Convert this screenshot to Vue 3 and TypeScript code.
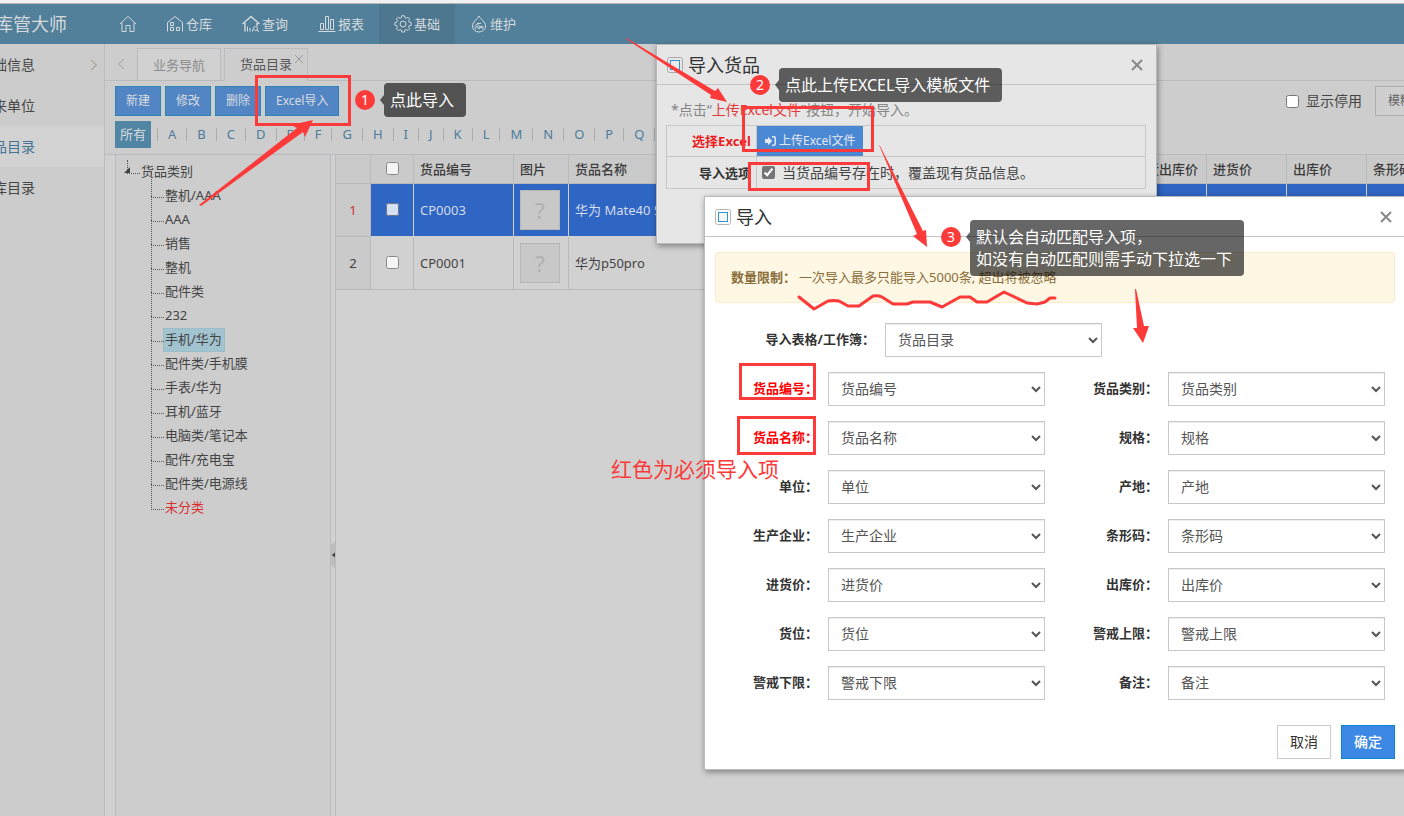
<script setup lang="ts">
import { ref } from 'vue'

interface Field {
  id: string
  label: string
  required?: boolean
}

interface Product {
  code: string
  name: string
  selected: boolean
}

const menus = [
  { icon: 'home', label: '' },
  { icon: 'store', label: '仓库' },
  { icon: 'query', label: '查询' },
  { icon: 'report', label: '报表' },
  { icon: 'gear', label: '基础' },
  { icon: 'drop', label: '维护' },
]
const activeMenu = ref('gear')

const sideItems = ['往来单位', '货品目录', '仓库目录']
const activeSide = ref('货品目录')

const letters = 'ABCDEFGHIJKLMNOPQRSTUVWXYZ'.split('')

const categories = [
  '整机/AAA', 'AAA', '销售', '整机', '配件类', '232', '手机/华为', '配件类/手机膜',
  '手表/华为', '耳机/蓝牙', '电脑类/笔记本', '配件/充电宝', '配件类/电源线', '未分类',
]
const activeCategory = ref('手机/华为')

const products = ref<Product[]>([
  { code: 'CP0003', name: '华为 Mate40 5G', selected: true },
  { code: 'CP0001', name: '华为p50pro', selected: false },
])

const fields: Field[] = [
  { id: 'code', label: '货品编号', required: true },
  { id: 'category', label: '货品类别' },
  { id: 'name', label: '货品名称', required: true },
  { id: 'spec', label: '规格' },
  { id: 'unit', label: '单位' },
  { id: 'origin', label: '产地' },
  { id: 'maker', label: '生产企业' },
  { id: 'barcode', label: '条形码' },
  { id: 'cost', label: '进货价' },
  { id: 'price', label: '出库价' },
  { id: 'slot', label: '货位' },
  { id: 'upper', label: '警戒上限' },
  { id: 'lower', label: '警戒下限' },
  { id: 'remark', label: '备注' },
]
const overwrite = ref(true)
const showDisabled = ref(false)
</script>

<template>
  <div class="page">
    <div class="strip"></div>
    <header class="topbar">
      <div class="brand"><span>库管大师</span></div>
      <nav class="menu">
        <a
          v-for="m in menus"
          :key="m.icon"
          href="#"
          class="menu-item"
          :class="{ active: activeMenu === m.icon }"
          :aria-label="m.label || '首页'"
          @click.prevent="activeMenu = m.icon"
        >
          <svg class="menu-icon" viewBox="0 0 18 18" width="18" height="18" fill="none" stroke="currentColor" stroke-width="1">
            <template v-if="m.icon === 'home'">
              <path d="M1 9 9 1.5 17 9M3 8v8.500h4v-6h4v6h4V8" />
            </template>
            <template v-else-if="m.icon === 'store'">
              <path d="M1.5 16.5V7.5L9 1.5l7.500 6v9M4.500 7.500h3v3h-3zM4.500 12.500h3v3h-3zM10.500 12.500h3v3h-3z" />
            </template>
            <template v-else-if="m.icon === 'query'">
              <path stroke-width="1.400" d="M.5 9 9 1.500 17.500 9M3 8v8.500M15 8v3" />
              <path d="M5.500 16.500v-5M8 16.500V13M10.500 16.500v-2" />
              <circle cx="13.500" cy="13.500" r="2" />
              <path d="m15 15 2 2" />
            </template>
            <template v-else-if="m.icon === 'report'">
              <path d="M2.500 8.500h3v6h-3zM7.500 1.500h3v13h-3zM12.500 4.500h3v10h-3zM.5 16.500h17" />
            </template>
            <template v-else-if="m.icon === 'gear'">
              <path d="M7.600 1.500h2.800l.5 2.100 1.300.6 1.900-1.200 1.900 1.900-1.200 1.900.6 1.300 2.100.5v2.800l-2.100.5-.6 1.300 1.200 1.900-1.900 1.900-1.900-1.200-1.300.6-.5 2.100H7.600l-.5-2.100-1.300-.6-1.900 1.200L2 15.100l1.200-1.900-.6-1.300-2.100-.5V8.600l2.100-.5.6-1.300L2 4.900 3.900 3l1.900 1.200 1.300-.6z" transform="translate(.4 -.7) scale(.96)" />
              <circle cx="9" cy="9" r="3" />
            </template>
            <template v-else>
              <path d="M9 1C7 4.500 2.500 7 2.500 11a6.500 6 0 0 0 13 0C15.500 7 11 4.500 9 1z" />
              <path d="M4.500 11.500c2-3 3.500-2.500 4.500-.5s3 2 4.500 0M5 14l2-3 2 3 2-3 2 3M7 8.500h4" />
            </template>
          </svg>
          <span v-if="m.label">{{ m.label }}</span>
        </a>
      </nav>
    </header>

    <div class="body">
      <aside class="side">
        <a href="#" class="side-item side-head" @click.prevent>
          <span>基础信息</span>
          <svg width="8" height="12" viewBox="0 0 8 12" fill="none" stroke="#a08f7e"><path d="m1 1 5.500 5L1 11" /></svg>
        </a>
        <a
          v-for="s in sideItems"
          :key="s"
          href="#"
          class="side-item"
          :class="{ active: s === activeSide }"
          @click.prevent="activeSide = s"
        ><span>{{ s }}</span></a>
      </aside>

      <main class="main">
        <div class="tabs">
          <button class="tab-prev" type="button" aria-label="向左">
            <svg width="8" height="12" viewBox="0 0 8 12" fill="none" stroke="#999"><path d="M7 1 1.500 6 7 11" /></svg>
          </button>
          <button class="tab" type="button">业务导航</button>
          <button class="tab current" type="button">
            货品目录
            <svg class="tab-close" width="8" height="8" viewBox="0 0 8 8" stroke="#999"><path d="m0 0 8 8M8 0 0 8" /></svg>
          </button>
        </div>

        <div class="toolbar">
          <button class="tool" type="button">新建</button>
          <button class="tool" type="button">修改</button>
          <button class="tool" type="button">删除</button>
          <button class="tool" type="button">Excel导入</button>
          <label class="show-disabled"><input v-model="showDisabled" type="checkbox" />显示停用</label>
          <button class="mode" type="button">模糊查询</button>
        </div>

        <div class="letters">
          <a href="#" class="all" @click.prevent>所有</a>
          <a v-for="l in letters" :key="l" href="#" class="letter" @click.prevent>{{ l }}</a>
        </div>

        <div class="content">
          <div class="tree">
            <div class="root">货品类别</div>
            <ul class="nodes">
              <li v-for="c in categories" :key="c" class="node">
                <a
                  href="#"
                  :class="{ active: c === activeCategory, warn: c === '未分类' }"
                  @click.prevent="activeCategory = c"
                >{{ c }}</a>
              </li>
            </ul>
          </div>
          <div class="splitter">
            <svg width="5" height="34" viewBox="0 0 5 34"><path d="M5 0 0 5v24l5 5z" fill="#bdbdbd" /><path d="M5 14 1 17l4 3z" fill="#444" /></svg>
          </div>
          <div class="grid">
            <table>
              <colgroup>
                <col class="c-no" /><col class="c-check" /><col class="c-code" /><col class="c-pic" /><col />
                <col class="c-price" /><col class="c-price" /><col class="c-price" /><col class="c-code" />
              </colgroup>
              <thead>
                <tr>
                  <th></th>
                  <th class="mid"><input type="checkbox" aria-label="全选" /></th>
                  <th>货品编号</th>
                  <th>图片</th>
                  <th>货品名称</th>
                  <th>最近出库价</th>
                  <th>进货价</th>
                  <th>出库价</th>
                  <th>条形码</th>
                </tr>
              </thead>
              <tbody>
                <tr v-for="(p, i) in products" :key="p.code" :class="{ picked: p.selected }">
                  <td class="no">{{ i + 1 }}</td>
                  <td class="mid"><input type="checkbox" :aria-label="p.code" /></td>
                  <td>{{ p.code }}</td>
                  <td class="pic"><span>?</span></td>
                  <td>{{ p.name }}</td>
                  <td></td>
                  <td></td>
                  <td></td>
                  <td></td>
                </tr>
              </tbody>
            </table>
          </div>
        </div>
      </main>
    </div>

    <section class="dialog upload" role="dialog" aria-labelledby="upload-title">
      <header class="dialog-head">
        <svg width="16" height="16" viewBox="0 0 16 16" fill="none"><rect x=".5" y=".5" width="15" height="15" rx="2" stroke="#aaa" /><rect x="3.500" y="3.500" width="9" height="9" fill="#ebebeb" stroke="#3594c8" /></svg>
        <h2 id="upload-title">导入货品</h2>
        <button class="close" type="button" aria-label="关闭"><svg width="12" height="12" viewBox="0 0 12 12" stroke="#888" stroke-width="2"><path d="m1 1 10 10M11 1 1 11" /></svg></button>
      </header>
      <p class="tip">*点击“<em>上传Excel文件</em>”按钮，开始导入。</p>
      <table class="options">
        <tbody>
          <tr>
            <th class="must">选择Excel</th>
            <td class="upload-cell">
              <button class="upload-btn" type="button">
                <svg width="11" height="10" viewBox="0 0 11 10" fill="currentColor"><path d="M0 3h3V.8L7.200 5 3 9.200V7H0zM7 0h2a2 2 0 0 1 2 2v6a2 2 0 0 1-2 2H7V8.500h2a.5.5 0 0 0 .5-.5V2a.5.5 0 0 0-.5-.5H7z" /></svg>
                上传Excel文件
              </button>
            </td>
          </tr>
          <tr>
            <th>导入选项</th>
            <td><label class="overwrite"><input v-model="overwrite" type="checkbox" />当货品编号存在时，覆盖现有货品信息。</label></td>
          </tr>
        </tbody>
      </table>
    </section>

    <section class="dialog mapping" role="dialog" aria-labelledby="mapping-title">
      <header class="dialog-head">
        <svg width="16" height="16" viewBox="0 0 16 16" fill="none"><rect x=".5" y=".5" width="15" height="15" rx="2" stroke="#b5b5b5" /><rect x="3.500" y="3.500" width="9" height="9" fill="#f6f6f6" stroke="#2a94d6" /></svg>
        <h2 id="mapping-title">导入</h2>
        <button class="close" type="button" aria-label="关闭"><svg width="12" height="12" viewBox="0 0 12 12" stroke="#888" stroke-width="2"><path d="m1 1 10 10M11 1 1 11" /></svg></button>
      </header>
      <div class="mapping-body">
        <div class="alert"><strong>数量限制：</strong><span>一次导入最多只能导入5000条, 超出将被忽略</span></div>
        <form class="form" @submit.prevent>
          <div class="field sheet">
            <label for="sheet">导入表格/工作簿：</label>
            <select id="sheet"><option>货品目录</option></select>
          </div>
          <div v-for="f in fields" :key="f.id" class="field" :class="{ required: f.required }">
            <label :for="f.id">{{ f.label }}：</label>
            <select :id="f.id"><option>{{ f.label }}</option></select>
          </div>
        </form>
        <footer class="actions">
          <button class="cancel" type="button">取消</button>
          <button class="confirm" type="button">确定</button>
        </footer>
      </div>
    </section>

    <svg class="marks" width="100%" height="100%" aria-hidden="true">
      <g fill="none" stroke="#fc3a39" stroke-width="3">
        <rect x="256.500" y="76.500" width="93" height="48" />
        <rect x="743.500" y="107.500" width="129" height="43" />
        <rect x="749.500" y="163.500" width="119" height="26" />
        <rect x="740.500" y="364.500" width="74" height="34" />
        <rect x="738.500" y="417.500" width="76" height="36" />
        <path
          stroke-linecap="round"
          stroke-linejoin="round"
          d="M799 297 814 309 828 301Q834 300 839 301L848 306H859L873 296Q878 295 882 297L893 304H907L913 302H930L942 307L960 297H970L977 302H987L1004 292L1027 303L1037 304L1045 302L1050 298H1055"
        />
      </g>
      <g fill="#fc3a39">
        <path d="M199 205 297 128 291 125 313 120 305 137 303 132 201 206z" />
        <path d="M625 38 628 39 715 91 718 88 727 102 710 98 711 95 626 39z" />
        <path d="M879 145 880 146 923 231 926 230 927 247 913 236 917 234z" />
        <path d="M1135 289 1136 289 1144 326 1149 326 1143 343 1133 328 1137 328z" />
      </g>
    </svg>
    <div class="note n1"><b>1</b><span>点此导入</span></div>
    <div class="note n2"><b>2</b><span>点此上传EXCEL导入模板文件</span></div>
    <div class="note n3"><b>3</b><span>默认会自动匹配导入项，<br />如没有自动匹配则需手动下拉选一下</span></div>
    <div class="remark">红色为必须导入项</div>
  </div>
</template>

<style>
html, body { height: 100%; overflow: hidden; }
</style>

<style scoped>
.page, .page * { box-sizing: border-box; }
.page {
  position: relative;
  display: flex;
  flex-direction: column;
  height: 100vh;
  overflow: hidden;
  background: #d0d0d0;
  color: #444;
  font: 13px/20px "Noto Sans", "Noto Sans CJK SC", sans-serif;
}
button, select, input { font: inherit; color: inherit; margin: 0; }
button { padding: 0; border: 0; background: none; white-space: nowrap; }
a { color: inherit; text-decoration: none; }
input[type="checkbox"] { width: 13px; height: 13px; flex: none; }

.strip { flex: none; height: 4px; background: #f1f1f4; border-bottom: 1px solid #b4b8bb; }
.topbar { flex: none; display: flex; height: 40px; background: #52809a; color: #d6dadd; }
.brand { flex: none; display: flex; align-items: center; width: 105px; overflow: hidden; font-size: 18px; white-space: nowrap; }
.brand span { margin-left: -5px; }
.menu { display: flex; }
.menu-item { display: flex; align-items: center; gap: 2px; padding: 0 15px; }
.menu-item:first-child { padding: 0 14px; }
.menu-item.active { background: #4d768f; }
.menu-icon { flex: none; }

.body { flex: 1; display: flex; min-height: 0; }
.side { flex: none; width: 105px; overflow: hidden; background: #cccccc; border-right: 1px solid #bdbdbf; font-size: 14px; }
.side-item { display: flex; align-items: center; height: 41px; white-space: nowrap; }
.side-item span { margin-left: -21px; }
.side-head { justify-content: space-between; padding-right: 6px; }
.side-item.active { background: #d2d2d2; color: #437394; }

.main { flex: 1; min-width: 0; display: flex; flex-direction: column; background: #cdcdcd; }
.tabs { flex: none; display: flex; align-items: flex-end; height: 37px; border-bottom: 1px solid #b9bbbf; }
.tab-prev { width: 32px; height: 32px; display: flex; align-items: center; justify-content: center; }
.tab { position: relative; height: 32px; padding: 0 15px; background: #d1d1d1; border: 1px solid #b9bbbf; border-bottom: 0; color: #8c8c8c; }
.tab.current { margin: 0 0 -1px 3px; height: 33px; padding-bottom: 2px; color: #555; background: #cdcdcd; }
.tab-close { position: absolute; top: 6px; right: 4px; }
.toolbar { flex: none; display: flex; align-items: center; gap: 4px; height: 40px; padding: 5px 0 5px 10px; overflow: hidden; }
.tool { height: 30px; padding: 0 10px; border: 1px solid #2c83b5; background: #5285c3; color: #d9dce0; font-size: 12px; }
.show-disabled { display: flex; align-items: center; gap: 7px; margin-left: auto; font-size: 14px; white-space: nowrap; }
.mode { height: 30px; margin: 0 -45px 0 9px; padding: 0 12px; border: 1px solid #adadad; background: #cfcfcf; font-size: 12px; color: #666; }
.letters { flex: none; display: flex; align-items: center; height: 33px; padding: 0 0 6px 10px; overflow: hidden; color: #4c7c9c; }
.all { height: 27px; margin-right: 6px; padding: 0 5px; background: #5086a4; color: #dadcde; line-height: 27px; white-space: nowrap; }
.letter { padding: 0 10px; border-left: 1px solid #acacac; line-height: 13px; }

.content { flex: 1; display: flex; min-height: 0; border-top: 1px solid #b9bbbf; padding-left: 10px; background: #d1d1d1; }
.tree { flex: none; width: 216px; padding: 5px 0 0 9px; background: #cdcdcd; border: solid #b9bbbf; border-width: 0 1px; }
.root { position: relative; height: 24px; padding-left: 16px; line-height: 22px; }
.root::before { content: ""; position: absolute; left: 2px; top: 0; width: 12px; height: 13px; border: dotted #555; border-width: 0 0 1px 1px; }
.root::after { content: ""; position: absolute; left: -1px; top: 7px; border: solid transparent; border-width: 0 0 6px 6px; border-bottom-color: #444; }
.nodes { margin: 0 0 0 26px; padding: 0; list-style: none; }
.node { position: relative; height: 24px; padding-left: 12px; line-height: 22px; white-space: nowrap; }
.node::before { content: ""; position: absolute; left: 0; top: -12px; width: 12px; height: 25px; border: dotted #555; border-width: 0 0 1px 1px; }
.node a { display: inline-block; height: 24px; padding: 0 3px 0 2px; }
.node a.active { padding-left: 1px; padding-right: 2px; background: #a2c3d0; border: 1px solid #9bbcc9; line-height: 20px; }
.node a.warn { color: #d8302f; }
.splitter { flex: none; display: flex; align-items: center; width: 4px; padding-top: 138px; }
.grid { flex: 1; min-width: 0; overflow: hidden; border-left: 1px solid #b9bbbf; }
.grid table { width: calc(100% + 63px); table-layout: fixed; border-collapse: separate; border-spacing: 0; }
.c-no { width: 35px; }
.c-check { width: 43px; }
.c-code { width: 100px; }
.c-pic { width: 55px; }
.c-price { width: 80px; }
.grid th, .grid td { padding: 0 6px; border: solid #b9b9b9; border-width: 0 1px 1px 0; overflow: hidden; white-space: nowrap; text-align: left; }
.grid th { height: 29px; padding-bottom: 1px; background: #cacaca; font-weight: 500; color: #3c3c3c; }
.grid td { height: 53px; }
.grid .mid { text-align: center; padding: 0 0 4px; }
.grid .mid input { opacity: 0.8; vertical-align: middle; }
.grid .no { text-align: center; background: #cacaca; padding: 0; }
.picked td { background: #2f65c3; color: #d5dcea; border-right-color: #d0d0d0; border-bottom-color: #d0d0d0; }
.grid .picked .no { color: #cb3434; border-color: #b9b9b9; }
.pic span { display: block; width: 40px; height: 40px; border: 1px solid #b6b6b6; background: #c8c8c8; color: #b0b0b0; font-size: 22px; line-height: 38px; text-align: center; }

.dialog { position: absolute; border: 1px solid #b9b9b9; box-shadow: 1px 2px 6px rgba(0, 0, 0, 0.4); }
.dialog-head { display: flex; align-items: center; gap: 5px; height: 40px; padding: 0 13px 0 10px; border-bottom: 1px solid #c4c4c4; }
.dialog-head h2 { flex: 1; margin: 0; font-size: 18px; line-height: 24px; font-weight: 400; color: #333; }
.close { display: flex; }
.upload { left: 656px; top: 44px; width: 501px; height: 200px; background: #e6e6e6; }
.tip { margin: 14px 14px 5px; font-size: 14px; line-height: 21px; color: #858585; }
.tip em { font-style: normal; color: #e23a3a; }
.options { width: 480px; margin-left: 9px; border-collapse: collapse; table-layout: fixed; }
.options th, .options td { height: 31px; padding: 0; border: 1px solid #c8c8c8; }
.options tr:last-child td { height: 32px; }
.options th { width: 90px; padding-right: 5px; text-align: right; color: #333; }
.options .must { color: #ed1c1c; }
.upload-btn { display: flex; align-items: center; gap: 3px; height: 30px; padding: 0 8px; background: #4a88d4; color: #e4e8ee; font-size: 12px; }
.overwrite { display: flex; align-items: center; gap: 7px; padding-left: 5px; font-size: 14px; }
.overwrite input { accent-color: #757575; }

.mapping { left: 704px; right: -2px; top: 196px; background: #fff; }
.mapping-body { padding: 15px 10px 10px; }
.alert { display: flex; align-items: center; height: 51px; padding: 0 15px 2px; border: 1px solid #faebcc; border-radius: 4px; background: #fdf7e3; color: #8a6d3b; }
.alert strong { margin-right: 3px; }
.form { display: grid; grid-template-columns: 1fr 1fr; row-gap: 15px; margin-top: 20px; color: #333; }
.field { display: flex; align-items: flex-start; }
.field label { flex: none; width: 113px; padding-right: 10px; font-weight: 700; line-height: 32px; text-align: right; white-space: nowrap; }
.field select { flex: 1; min-width: 0; height: 34px; margin-right: 10px; padding: 0 8px 2px; border: 1px solid #c8c8c8; border-radius: 0; background-color: #fff; box-shadow: inset 0 1px 1px rgba(0, 0, 0, 0.075); color: #555; font-size: 14px; }
.sheet { grid-column: 1 / -1; }
.sheet label { width: 25%; }
.field.sheet select { flex: none; width: 217px; }
.required label { color: #f00; }
.actions { display: flex; justify-content: flex-end; gap: 10px; margin-top: 25px; font-size: 14px; }
.actions button { height: 34px; padding: 0 12px; border: 1px solid #ccc; color: #333; }
.actions .confirm { background: #3d88e5; border-color: #0b83cd; color: #fff; font-weight: 500; }

.marks { position: absolute; inset: 0; pointer-events: none; }
.note { position: absolute; display: flex; align-items: center; gap: 9px; color: #fff; }
.note b { flex: none; width: 20px; height: 20px; border-radius: 50%; background: #fc3a39; font-size: 14px; font-weight: 400; text-align: center; }
.note span { position: relative; padding: 6px 12px 6px 6px; border-radius: 4px; background: rgba(0, 0, 0, 0.6); font-size: 16px; line-height: 22px; white-space: nowrap; }
.note span::before { content: ""; position: absolute; left: -4px; top: 17px; margin-top: -5px; border: solid transparent; border-width: 5px 4px 5px 0; border-right-color: rgba(0, 0, 0, 0.6); }
.n1 { left: 355px; top: 83px; }
.n2 { left: 750px; top: 68px; }
.n3 { left: 941px; top: 220px; }
.n3 b { margin-bottom: 22px; }
.remark { position: absolute; left: 611px; top: 455px; color: #fc3a39; font-size: 21px; line-height: 28px; }
</style>
